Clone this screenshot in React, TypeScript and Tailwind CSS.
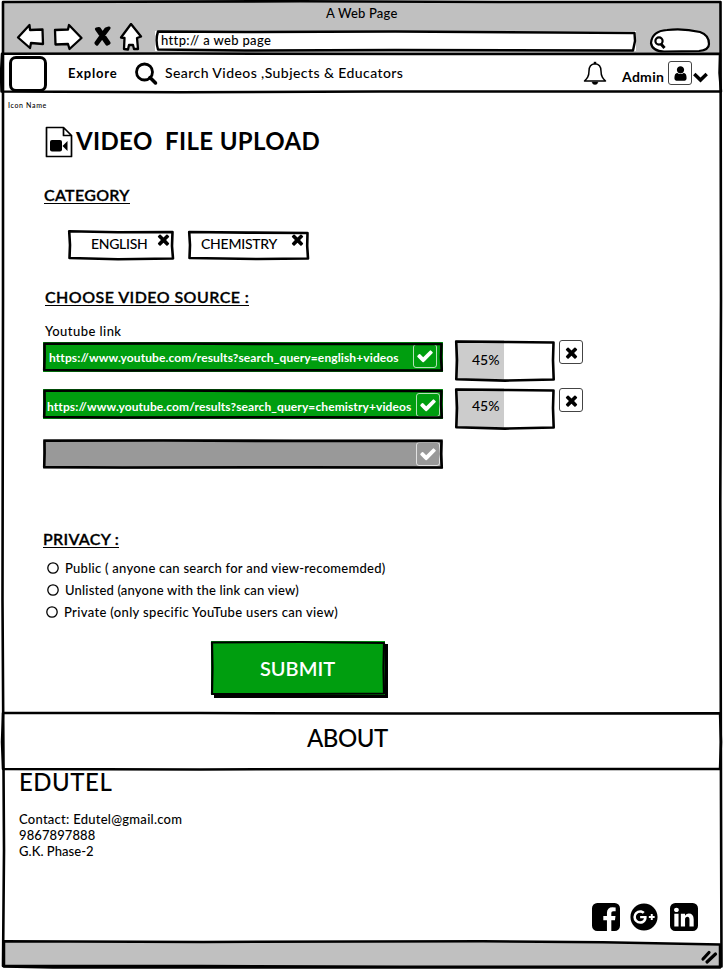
import React from "react";
import { FaGooglePlus } from "react-icons/fa";

const CHECK =
  "M1671 566q0 40-28 68l-724 724-136 136q-28 28-68 28t-68-28l-136-136-362-362q-28-28-28-68t28-68l136-136q28-28 68-28t68 28l294 295 656-657q28-28 68-28t68 28l136 136q28 28 28 68z";
const TIMES =
  "M1490 1322q0 40-28 68l-136 136q-28 28-68 28t-68-28l-294-294-294 294q-28 28-68 28t-68-28l-136-136q-28-28-28-68t28-68l294-294-294-294q-28-28-28-68t28-68l136-136q28-28 68-28t68 28l294 294 294-294q28-28 68-28t68 28l136 136q28 28 28 68t-28 68l-294 294 294 294q28 28 28 68z";
const USER =
  "M1536 1399q0 109-62.500 187t-150.500 78h-854q-88 0-150.500-78t-62.500-187q0-85 8.500-160.500t31.500-152 58.500-131 94-89 134.500-34.500q131 128 313 128t313-128q76 0 134.500 34.500t94 89 58.500 131 31.500 152 8.500 160.500zm-256-887q0 159-112.500 271.500t-271.500 112.500-271.500-112.500-112.500-271.500 112.500-271.500 271.500-112.500 271.500 112.500 112.500 271.500z";
const FACEBOOK =
  "M1376 128q119 0 203.500 84.500t84.500 203.500v960q0 119-84.500 203.500t-203.500 84.500h-188v-595h199l30-232h-229v-148q0-56 23.500-84t91.500-28l122-1v-207q-63-9-178-9-136 0-217.500 80t-81.500 226v171h-200v232h200v595h-532q-119 0-203.500-84.500t-84.500-203.500v-960q0-119 84.500-203.500t203.500-84.500h960z";
const LINKEDIN =
  "M365 1414h231v-694h-231v694zm246-908q-1-52-36-86t-93-34-94.500 34-36.500 86q0 51 35.500 85.500t92.500 34.500h1q59 0 95-34.500t36-85.500zm585 908h231v-398q0-154-73-233t-193-79q-136 0-209 117h2v-101h-231q3 66 0 694h231v-388q0-38 7-56 15-35 45-59.500t74-24.500q116 0 116 157v371zm468-998v960q0 119-84.500 203.500t-203.500 84.500h-960q-119 0-203.500-84.500t-84.500-203.500v-960q0-119 84.500-203.500t203.500-84.500h960q119 0 203.500 84.500t84.500 203.500z";

function Glyph({ d, className, box = "0 0 1792 1792" }: { d: string; className: string; box?: string }) {
  return (
    <svg viewBox={box} className={className} fill="currentColor">
      <path d={d} />
    </svg>
  );
}

/* Hand-drawn outline stretched over the box that contains it. */
function Sketch({ w, h, d, sw = 2.6 }: { w: number; h: number; d: string; sw?: number }) {
  return (
    <svg viewBox={`0 0 ${w} ${h}`} className="pointer-events-none absolute inset-0 h-full w-full overflow-visible" fill="none" stroke="#000" strokeWidth={sw} strokeLinejoin="round">
      <path d={d} />
    </svg>
  );
}

function Tag({ label, wide }: { label: string; wide?: boolean }) {
  return (
    <div className={wide ? "relative flex h-[30px] w-[121px] items-start" : "relative flex h-[30px] w-[106px] items-start"}>
      {wide ? (
        <Sketch w={121} h={30} d="M1.2 2 L60 2.600 L119.500 3 L119.200 16 L120 28.500 L70 29 L1.500 28 L2 15 Z" />
      ) : (
        <Sketch w={106} h={30} d="M1.2 1.2 L50 2.300 L104.500 2 L104 16 L105 28.500 L50 29.200 L1.500 28 L2 15 Z" />
      )}
      <span className={wide ? "ml-[13px] mt-[5px] w-[78px] text-[14px] leading-[18px] tracking-[-0.25px]" : "ml-[23px] mt-[5px] w-[58px] text-[14px] leading-[18px] tracking-[-0.3px]"}>{label}</span>
      <Glyph d={TIMES} className={wide ? "ml-[10px] mt-[1px] size-[17px]" : "ml-[6px] mt-[1px] size-[17px]"} />
    </div>
  );
}

function Bar({ children, gray }: { children?: React.ReactNode; gray?: boolean }) {
  return (
    <div className={gray ? "relative flex h-[30px] w-[400px] bg-[#999999] text-white" : "relative flex h-[30px] w-[400px] bg-[#009e0f] text-white"}>
      <Sketch w={400} h={30} d="M1.500 1.700 L120 1.500 L250 2 L398.500 2 L398 15 L398.800 28.500 L260 28.200 L80 28.500 L1.200 28 L1.600 14 Z" />
      {children}
    </div>
  );
}

function Progress({ text }: { text: string }) {
  return (
    <div className="relative flex h-[42px] w-[100px] bg-white">
      <div className="h-[39px] w-[49px] bg-[#cccccc]">
        <div className={text}>45%</div>
      </div>
      <Sketch w={100} h={42} d="M1.200 1.500 L50 2 L98.500 2.500 L98 20 L98.700 39.500 L50 40.600 L1.300 39.200 L2 20 Z" />
    </div>
  );
}

function CloseButton() {
  return (
    <div className="flex size-[24px] items-center justify-center rounded-[3px] border border-[#444] bg-white">
      <Glyph d={TIMES} className="size-[17px]" />
    </div>
  );
}

function Radio({ label, text }: { label: string; text: string }) {
  return (
    <label className="flex h-[22px] items-center gap-[6px]">
      <svg className="size-[12px]" viewBox="0 0 12 12" fill="#fff" stroke="#000" strokeWidth="1.300">
        <circle cx="6" cy="6" r="5.200" />
      </svg>
      <span className={text}>{label}</span>
    </label>
  );
}

export default function App() {
  return (
    <div className="relative flex h-[969px] w-[723px] flex-col overflow-hidden bg-white font-['Lato',sans-serif] font-medium text-black">
      {/* Browser chrome */}
      <header className="ml-[3px] mt-[2px] h-[51px] w-[717px] bg-[#c0c0c0]">
        <div className="pl-[323px] pt-[2px] text-[13px] leading-[18px] tracking-[0.2px]">A Web Page</div>
        <div className="mt-px flex items-start">
          <svg className="ml-[12px] h-[29px] w-[130px]" viewBox="15 23 130 29" fill="#fff" stroke="#000" strokeWidth="2.300" strokeLinejoin="round" strokeLinecap="round">
            <path d="M18 37.500 L29.500 25 L30 30 L42.500 29.500 L43 44 L31 43 L30 48 Z" />
            <path d="M55 30 L68 29.500 L69 25 L81.500 38 L69.500 49 L68 44 L55.500 44.500 Z" />
            <path d="M96.500 29 L99 28.500 L109 43 L107 44 Z M109 28 L106 29 L96 43 L97 44 Z" fill="#000" strokeWidth="3.200" />
            <path d="M131 24 L141 36.500 L137 38 L138 49 L134 49 L133 45 L129 45 L128 49.500 L124 49 L124.500 38 L121 37.500 Z" />
          </svg>
          <div className="relative ml-[10px] mt-[8px] h-[20px] w-[481px] bg-white pl-[6px] text-[13px] leading-[19px] tracking-[0.35px]">
            <Sketch w={481} h={20} sw={2.4} d="M3 .5 L90 1 L240 .5 L400 1.500 L479.500 2 L480 10 L478 19.500 L240 19 L90 19.500 L3 18.500 Q.2 9 3 .5 Z" />
            <span className="relative">http:// a web page</span>
          </div>
          <svg className="ml-[13px] mt-[5px] h-[25px] w-[62px]" viewBox="649 28 62 25" fill="#fff" stroke="#000" strokeWidth="2.200">
            <path d="M651 43 Q652 31 667 30 Q683 28 700 32 Q709 35 709 44 Q709 50 699 51 L664 51.500 Q652 51 651 43 Z" />
            <circle cx="659" cy="41" r="3.600" />
            <path d="M661 44 L664.500 48" strokeWidth="3" />
          </svg>
        </div>
      </header>

      {/* Site navigation */}
      <nav className="relative flex h-[39px] w-[722px] items-start bg-white">
        <Sketch w={722} h={39} sw={2.500} d="M2 .8 L180 .5 L400 1 L720 .8 L719.500 20 L721 38.500 L380 38.500 L180 39.300 L1.500 38.500 L1 20 Z" />
        <div className="ml-[9px] mt-[3px] h-[36px] w-[38px] rounded-[7px] border-3 border-black bg-white" />
        <span className="ml-[21px] mt-[11px] w-[66px] text-[13px] font-bold leading-[18px] tracking-[0.8px]">Explore</span>
        <svg className="mt-[9px] size-[24px]" viewBox="0 0 24 24" fill="none" stroke="#000">
          <circle cx="10.500" cy="10" r="8" strokeWidth="2.800" />
          <path d="M16 15.500 L21.500 21" strokeWidth="3.500" strokeLinecap="round" />
        </svg>
        <span className="ml-[7px] mt-[11px] w-[418px] whitespace-nowrap text-[14px] leading-[18px] tracking-[0.42px]">Search Videos ,Subjects &amp; Educators</span>
        <svg className="mt-[8px] h-[25px] w-[24px]" viewBox="0 0 24 25" fill="none" stroke="#000" strokeWidth="1.500" strokeLinejoin="round">
          <path d="M12 2.700 C8 3 6 6 6 10 C6 15.500 4 17.500 1.500 20 H22.500 C20 17.500 18 15.500 18 10 C18 6 16 3 12 2.700 Z" />
          <path d="M12 .8 V3" strokeWidth="2.500" />
          <path d="M9 21 H15 Q14.500 23.500 12 23.500 Q9.500 23.500 9 21 Z" fill="#000" strokeWidth=".5" />
        </svg>
        <span className="ml-[15px] mt-[15px] w-[46px] text-[14px] font-bold leading-[18px] tracking-[0.3px]">Admin</span>
        <div className="mt-[8px] flex size-[24px] items-center justify-center rounded-[3px] border border-[#444]">
          <Glyph d={USER} className="size-[17px]" />
        </div>
        <svg className="ml-[1px] mt-[19px] h-[11px] w-[15px]" viewBox="0 0 15 11" fill="none" stroke="#000" strokeWidth="3.500">
          <path d="M1.300 2 L7.500 8 L13.700 2" />
        </svg>
      </nav>

      {/* Upload form */}
      <main className="flex h-[620px] flex-col">
        <div className="ml-[8px] mt-[8px] h-[10px] text-[7px] leading-[10px] tracking-[0.65px]">Icon Name</div>
        <div className="ml-[45px] mt-[16px] flex h-[32px] items-start">
          <svg className="h-[32px] w-[28px]" viewBox="0 0 28 32" fill="none" stroke="#000" strokeWidth="1.700" strokeLinejoin="round">
            <path d="M1.500 1.500 H18.500 L26.500 9.500 V30.500 H1.500 Z M18.500 1.500 V9.500 H26.500" />
            <rect x="5" y="14" width="12" height="11.500" rx="2" fill="#000" stroke="none" />
            <path d="M17.500 20 L22.500 15 V25 Z" fill="#000" stroke="none" />
          </svg>
          <h1 className="ml-[3px] whitespace-pre text-[24px] font-bold leading-[29px] tracking-[0.36px]">VIDEO  FILE UPLOAD</h1>
        </div>
        <div className="ml-[44px] mt-[28px] flex h-[18px]">
          <h2 className="border-b border-black text-[16px] font-semibold leading-[17px] tracking-[0.3px] [-webkit-text-stroke:0.3px_#000]">CATEGORY</h2>
        </div>
        <div className="ml-[68px] mt-[26px] flex gap-[14px]">
          <Tag label="ENGLISH" />
          <Tag label="CHEMISTRY" wide />
        </div>
        <div className="ml-[45px] mt-[28px] flex h-[18px]">
          <h2 className="border-b border-black text-[16px] font-semibold leading-[17px] tracking-[0.45px] [-webkit-text-stroke:0.3px_#000]">CHOOSE VIDEO SOURCE :</h2>
        </div>
        <div className="ml-[45px] mt-[16px] h-[18px] text-[13px] leading-[18px] tracking-[0.45px]">Youtube link</div>
        <div className="ml-[43px] flex">
          <div className="mt-[2px] flex w-[412px] flex-col">
            <Bar>
              <span className="ml-[6px] mt-[7px] w-[364px] whitespace-nowrap text-[12px] font-bold leading-[18px] tracking-[0.11px]">https://www.youtube.com/results?search_query=english+videos</span>
              <span className="mt-[2px] flex size-[24px] items-center justify-center rounded-[3px] border border-white/70">
                <Glyph d={CHECK} className="size-[18px]" />
              </span>
            </Bar>
            <div className="mt-[17px]">
              <Bar>
                <span className="ml-[4px] mt-[9px] w-[369px] whitespace-nowrap text-[12px] font-bold leading-[18px] tracking-[0.1px]">https://www.youtube.com/results?search_query=chemistry+videos</span>
                <span className="mt-[4px] flex size-[24px] items-center justify-center rounded-[3px] border border-white/70">
                  <Glyph d={CHECK} className="size-[18px]" />
                </span>
              </Bar>
            </div>
            <div className="mt-[20px]">
              <Bar gray>
                <span className="ml-[373px] mt-[3px] flex size-[24px] items-center justify-center rounded-[3px] border border-white/70">
                  <Glyph d={CHECK} className="size-[18px]" />
                </span>
              </Bar>
            </div>
          </div>
          <div className="flex flex-col gap-[6px]">
            <Progress text="pl-[17px] pt-[11px] text-[14px] leading-[18px]" />
            <Progress text="pl-[17px] pt-[9px] text-[14px] leading-[18px]" />
          </div>
          <div className="ml-[4px] flex flex-col gap-[24px]">
            <CloseButton />
            <CloseButton />
          </div>
        </div>
        <div className="ml-[43px] mt-[61px] flex h-[18px]">
          <h2 className="border-b border-black text-[16px] font-semibold leading-[17px] tracking-[0.3px] [-webkit-text-stroke:0.3px_#000]">PRIVACY :</h2>
        </div>
        <div className="ml-[47px] mt-[9px] flex h-[66px] flex-col whitespace-nowrap text-[13px] leading-[18px]">
          <Radio label="Public ( anyone can search for and view-recomemded)" text="tracking-[0.26px]" />
          <Radio label="Unlisted (anyone with the link can view)" text="tracking-[0.19px]" />
          <div className="-ml-px">
            <Radio label="Private (only specific YouTube users can view)" text="tracking-[0.35px]" />
          </div>
        </div>
        <button className="relative ml-[211px] mt-[18px] flex h-[54px] w-[174px] items-center justify-center bg-[#009e0f] pr-[1px] text-[20px] font-semibold leading-[24px] tracking-[0px] text-white shadow-[3px_3px_0_#000]">
          <Sketch w={174} h={54} sw={2.200} d="M1 1.500 L90 1 L173 2 L172.500 27 L173 52.500 L90 53 L1 53 L1.500 27 Z" />
          <span className="relative">SUBMIT</span>
        </button>
      </main>

      {/* About strip */}
      <section className="relative h-[58px] w-[722px]">
        <Sketch w={722} h={58} sw={2.500} d="M3 1 L200 1 L400 1.500 L720 1.300 L721 30 L720 57 L400 57 L200 57.500 L3 57 L2 30 Z" />
        <div className="pl-[307px] pt-[12px] text-[24px] leading-[28px] tracking-[-0.5px]">ABOUT</div>
      </section>

      {/* Footer */}
      <footer className="flex h-[171px] flex-col">
        <div className="ml-[19px] h-[28px] text-[24px] leading-[23px] tracking-[0.5px]">EDUTEL</div>
        <div className="ml-[19px] mt-[13px] text-[13px] leading-[16px]">
          <p className="tracking-[0.26px]">Contact: Edutel@gmail.com</p>
          <p className="tracking-[0.1px]">9867897888</p>
          <p className="tracking-[0.05px]">G.K. Phase-2</p>
        </div>
        <div className="ml-[592px] mt-[44px] flex">
          <Glyph d={FACEBOOK} box="128 128 1536 1536" className="size-[28px]" />
          <FaGooglePlus className="ml-[10px] size-[28px]" />
          <Glyph d={LINKEDIN} box="128 128 1536 1536" className="ml-[12px] size-[28px]" />
        </div>
      </footer>

      {/* Status bar */}
      <div className="relative ml-[3px] h-[28px] w-[717px]">
        <svg className="h-full w-full overflow-visible" viewBox="0 0 717 28" fill="#c0c0c0" stroke="#000" strokeWidth="2.500" strokeLinejoin="round">
          <path d="M1 .3 L200 1 L480 .3 L600 1.300 L717 3.500 V26.500 L400 26.500 L50 26.500 L1 25.500 Z" />
          <path d="M700 18 L706 11.500 M704 21 L712.500 13" strokeWidth="3.200" strokeLinecap="round" />
        </svg>
      </div>

      <Sketch w={723} h={969} sw={2.600} d="M3 2 L300 1.300 L500 2 L720.500 2 L721 300 L720.300 500 L721 800 L721.500 966.500 L400 966.800 L200 966 L3 966 L4 850 L2.500 600 L3 300 Z" />
    </div>
  );
}
